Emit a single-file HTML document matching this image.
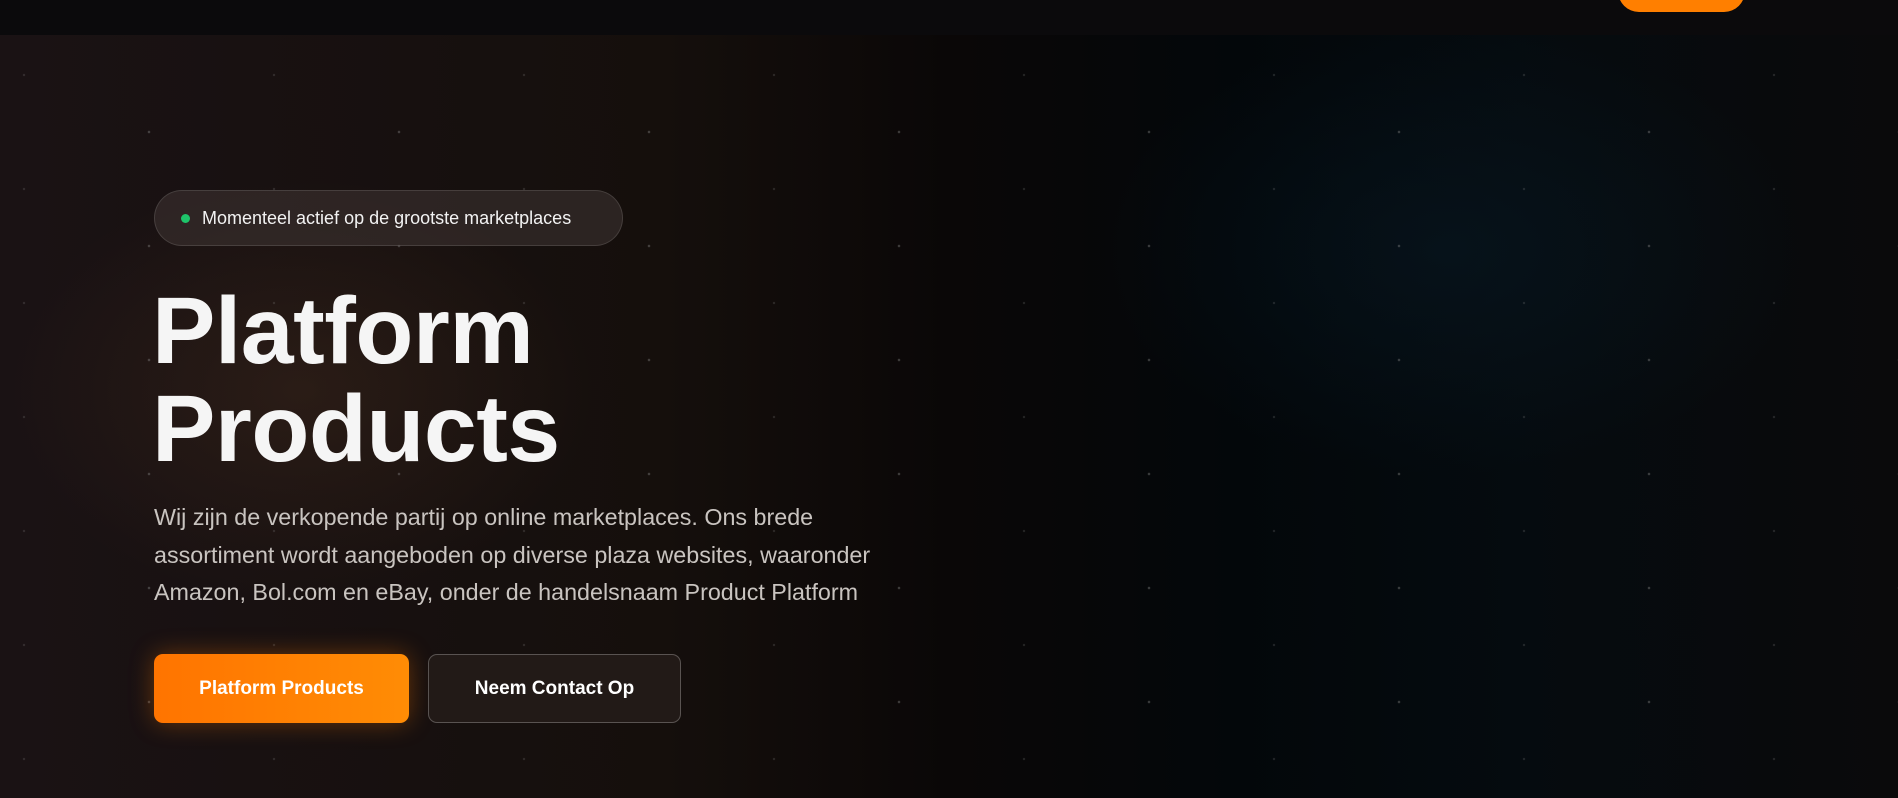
<!DOCTYPE html>
<html><head><meta charset="utf-8"><style>
html,body{margin:0;padding:0;width:1898px;height:798px;overflow:hidden;background:#0a0808;font-family:"Liberation Sans",sans-serif;}
.bg{position:absolute;inset:0;background:
radial-gradient(ellipse 420px 300px at 300px 390px,rgba(70,45,30,.4),transparent 70%),
radial-gradient(ellipse 500px 320px at 1450px 250px,rgba(8,26,38,.5),transparent 70%),
linear-gradient(90deg,#1a1214 0%,#150f0c 35%,#0a0707 50%,#03070a 65%,#050b0f 80%,#0a0a0b 100%);}
.dots{position:absolute;inset:35px 0 0 0;background-image:radial-gradient(circle,rgba(150,150,150,.35) 1.1px,transparent 1.5px);background-size:250px 114px;background-position:-226px 40px;}
.dots2{position:absolute;inset:35px 0 0 0;background-image:radial-gradient(circle,rgba(150,150,150,.2) 1px,transparent 1.4px);background-size:250px 114px;background-position:-101px 97px;}
.hdr{position:absolute;left:0;top:0;width:1898px;height:35px;background:#0b0a0c;}
.hbtn{position:absolute;left:1618px;top:-30px;width:127px;height:42px;border-radius:21px;background:#ff7f00;}
.badge{position:absolute;left:154px;top:190px;width:469px;height:56px;border-radius:28px;background:rgba(60,50,48,.6);border:1px solid rgba(255,255,255,.12);box-sizing:border-box;}
.badge .d{position:absolute;left:26px;top:23px;width:9px;height:9px;border-radius:50%;background:#1ec46a;}
.badge span{position:absolute;left:47px;top:17px;color:#f2f2f2;font-size:18px;}
h1{position:absolute;left:152px;top:282px;margin:0;color:#f5f5f5;font-size:95px;line-height:98px;font-weight:700;letter-spacing:-0.5px;}
p{position:absolute;left:154px;top:499px;margin:0;width:745px;color:#c9c4c0;font-size:23.3px;line-height:37.5px;}
.b1{position:absolute;left:154px;top:654px;width:255px;height:69px;border-radius:9px;background:linear-gradient(90deg,#ff7400,#ff8c05);box-shadow:0 0 24px rgba(255,120,0,.35);color:#fff;font-weight:700;font-size:19px;text-align:center;line-height:69px;}
.b2{position:absolute;left:428px;top:654px;width:253px;height:69px;box-sizing:border-box;border-radius:9px;background:#221a17;border:1px solid rgba(255,255,255,.25);color:#fff;font-weight:700;font-size:19px;text-align:center;line-height:67px;}
</style></head><body>
<div class="bg"></div><div class="dots"></div><div class="dots2"></div>
<div class="hdr"><div class="hbtn"></div></div>
<div class="badge"><div class="d"></div><span>Momenteel actief op de grootste marketplaces</span></div>
<h1>Platform<br>Products</h1>
<p>Wij zijn de verkopende partij op online marketplaces. Ons brede assortiment wordt aangeboden op diverse plaza websites, waaronder Amazon, Bol.com en eBay, onder de handelsnaam Product Platform</p>
<div class="b1">Platform Products</div>
<div class="b2">Neem Contact Op</div>
</body></html>
